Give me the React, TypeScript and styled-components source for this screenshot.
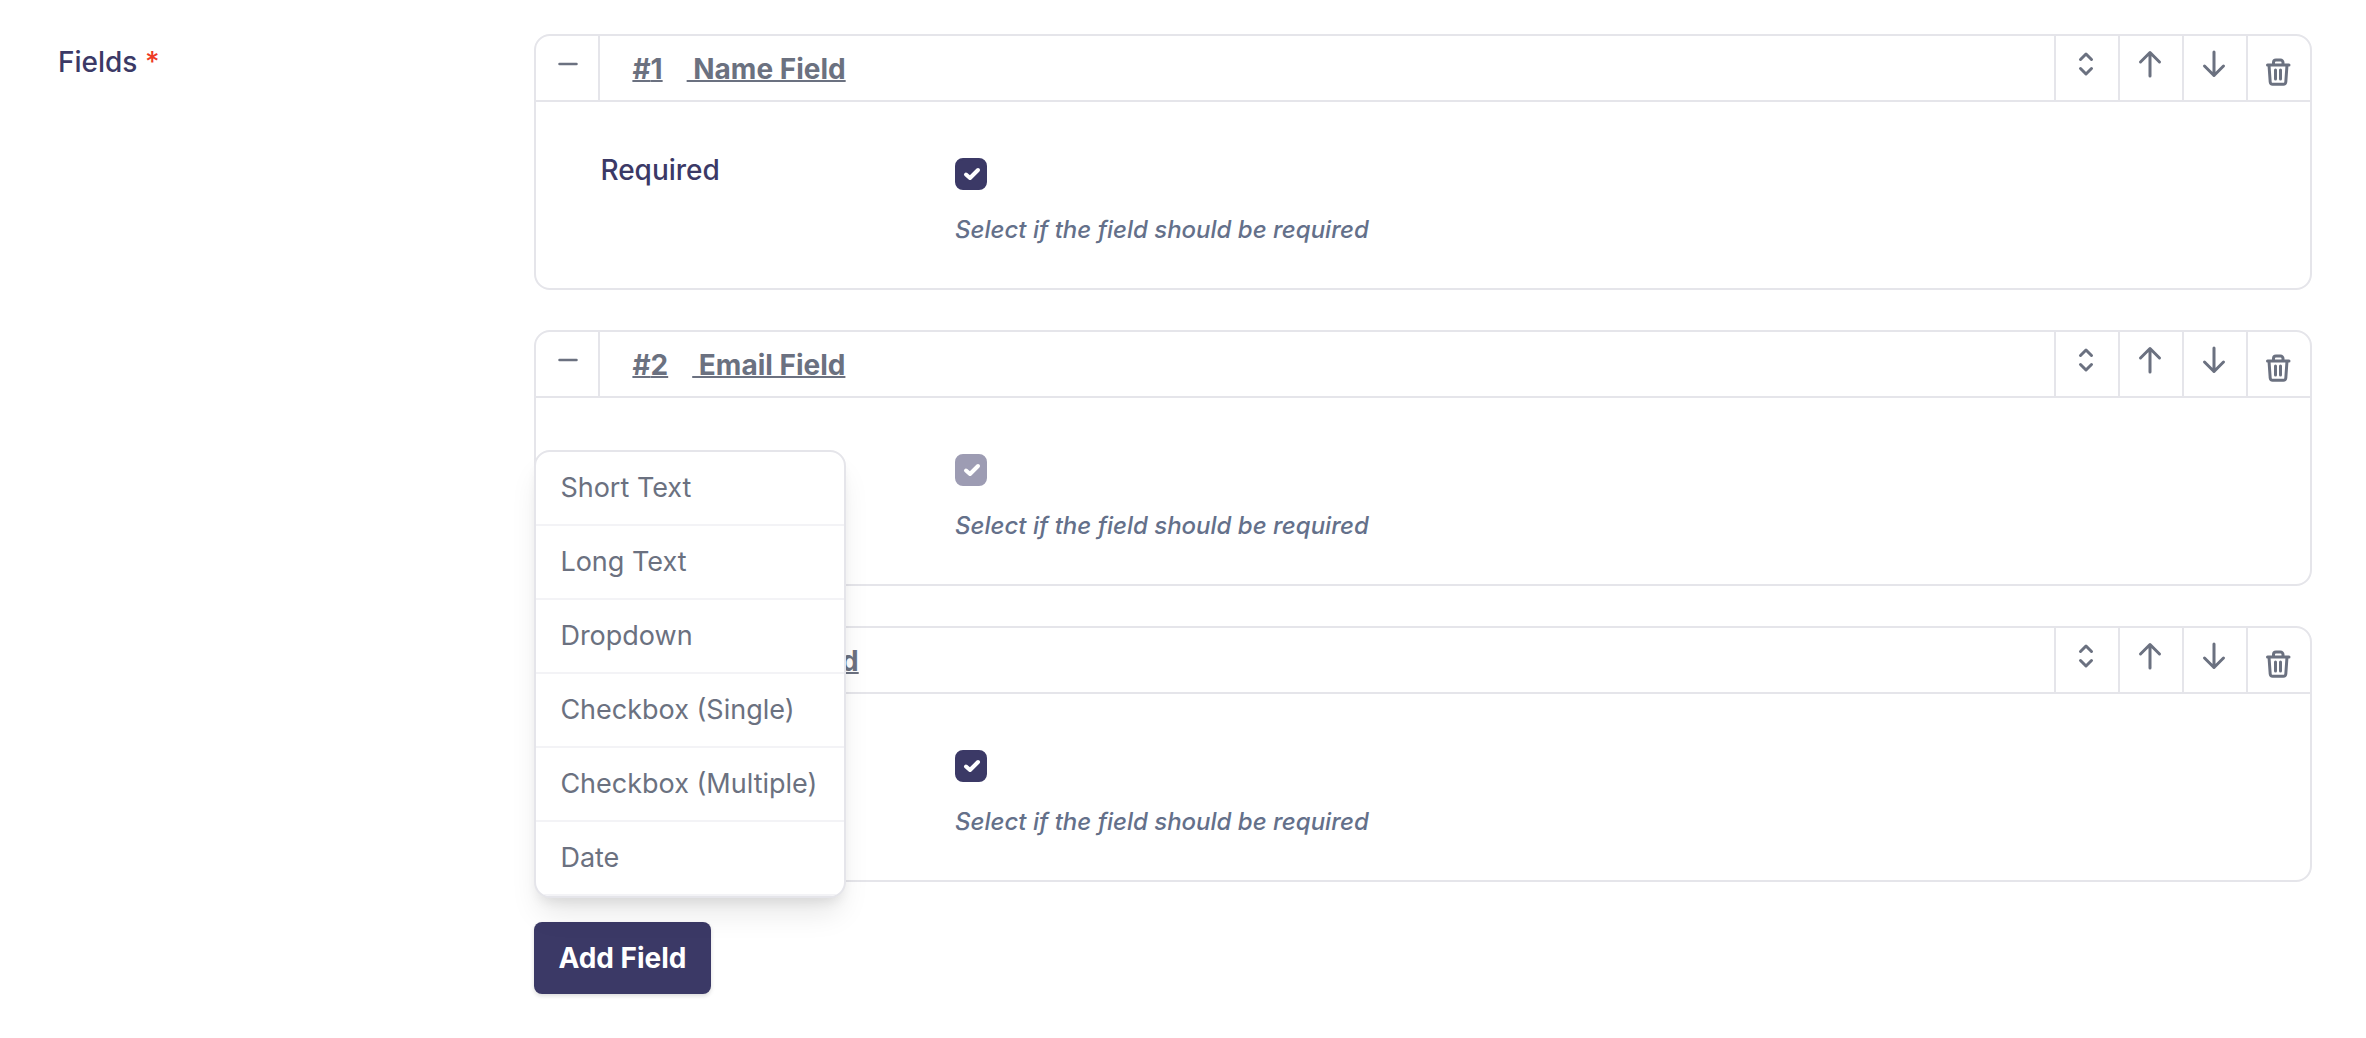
import React, { useState } from "react";
import styled, { createGlobalStyle } from "styled-components";

const color = {
  brand: "#3b3966",
  line: "#e5e5ea",
  lineSoft: "#f3f3f6",
  text: "#6b7180",
  help: "#64708a",
  danger: "#ee3a24",
};

const GlobalStyle = createGlobalStyle`
  *, *::before, *::after { box-sizing: border-box; }
  body {
    margin: 0;
    background: #fff;
    color: ${color.text};
    font-family: Inter, "Liberation Sans", sans-serif;
    font-size: 28px;
    line-height: 40px;
  }
  button { font: inherit; color: inherit; background: none; border: 0; padding: 0; cursor: pointer; }
`;

const FormRow = styled.main`
  display: grid;
  grid-template-columns: repeat(5, minmax(0, 1fr));
  column-gap: 128px;
  padding: 34px 54px 44px 58px;
`;

const GroupLabel = styled.h2`
  margin: 0;
  padding-top: 8px;
  font-size: 28px;
  font-weight: 500;
  line-height: 40px;
  color: ${color.brand};
`;

const Asterisk = styled.span`
  color: ${color.danger};
`;

const Content = styled.div`
  grid-column: span 4;
  display: flex;
  flex-direction: column;
  align-items: stretch;
  gap: 40px;
`;

const Card = styled.section`
  border: 2px solid ${color.line};
  border-radius: 16px;
  background: #fff;
`;

const CardHeader = styled.header`
  display: flex;
  height: 66px;
  border-bottom: 2px solid ${color.line};
`;

const IconButton = styled.button<{ $side: "left" | "right"; $low?: boolean }>`
  display: flex;
  justify-content: center;
  align-items: flex-start;
  width: 64px;
  padding-top: ${(p) => (p.$low ? 20 : 12)}px;
  ${(p) =>
    p.$side === "left"
      ? `border-right: 2px solid ${color.line}; padding-left: 2px;`
      : `border-left: 2px solid ${color.line}; padding-right: 2px;`}
`;

const Title = styled.h3`
  display: flex;
  align-items: center;
  flex: 1;
  gap: 24px;
  margin: 0;
  padding: 2px 0 0 32px;
  font-size: 28px;
  font-weight: 700;
  line-height: 40px;
`;

const TitlePart = styled.span`
  text-decoration: underline;
  text-decoration-thickness: 2px;
  white-space: pre;
`;

const CardBody = styled.div`
  display: grid;
  grid-template-columns: repeat(5, minmax(0, 1fr));
  column-gap: 128px;
  padding: 48px 64px 38px;
`;

const FieldLabel = styled.label`
  font-weight: 500;
  color: ${color.brand};
`;

const Control = styled.div`
  grid-column: span 4;
  display: flex;
  flex-direction: column;
  align-items: flex-start;
  gap: 20px;
  padding-top: 8px;
`;

const CheckWrap = styled.span<{ $locked?: boolean }>`
  --box: ${(p) => (p.$locked ? "#9d9cb3" : color.brand)};
  display: grid;
  width: 32px;
  height: 32px;
  & > * { grid-area: 1 / 1; }
  & > svg { pointer-events: none; }
`;

const CheckInput = styled.input`
  appearance: none;
  width: 32px;
  height: 32px;
  margin: 0;
  border: 2px solid var(--box);
  border-radius: 8px;
  background: #fff;
  &:checked { background: var(--box); }
`;

const Help = styled.p`
  margin: 0;
  font-size: 24px;
  line-height: 40px;
  font-style: italic;
  font-weight: 500;
  color: ${color.help};
`;

const AddArea = styled.div`
  position: relative;
  display: flex;
`;

const AddButton = styled.button`
  padding: 16px 24px;
  border-radius: 8px;
  background: ${color.brand};
  color: #fff;
  font-weight: 700;
  box-shadow: 0 2px 4px rgba(0, 0, 0, 0.14);
`;

const Menu = styled.div`
  position: absolute;
  left: 0;
  bottom: calc(100% + 24px);
  display: flex;
  flex-direction: column;
  min-width: 312px;
  border: 2px solid ${color.line};
  border-radius: 16px;
  background: #fff;
  overflow: hidden;
  box-shadow: 0 20px 30px -6px rgba(0, 0, 0, 0.1), 0 8px 12px -4px rgba(0, 0, 0, 0.08);
`;

const MenuItem = styled.button`
  padding: 16px 24px;
  border-bottom: 2px solid ${color.lineSoft};
  font-size: 27px;
  text-align: left;
  white-space: nowrap;
`;

const icons = {
  minus: "M7.500 16h17",
  sort: "M10.500 11.500 16 6l5.500 5.500M10.500 20.500 16 26l5.500-5.500",
  up: "M16 28V4.500M6.500 14 16 4.500l9.500 9.500",
  down: "M16 4v23.500M6.500 18l9.500 9.500 9.500-9.500",
  trash:
    "M5.500 9h21.500M11.500 9V6.500A2.500 2.500 0 0 1 14 4h4.500A2.500 2.500 0 0 1 21 6.500V9M7 9l1.200 17a2.500 2.500 0 0 0 2.500 2.300h10.600a2.500 2.500 0 0 0 2.500-2.300L25 9M13.500 14v9M18.500 14v9",
};

function Icon({ name }: { name: keyof typeof icons }) {
  return (
    <svg width="32" height="32" viewBox="0 0 32 32" fill="none" stroke="currentColor"
      strokeWidth={name === "minus" ? 2.5 : 3} strokeLinecap="round" strokeLinejoin="round" aria-hidden="true">
      <path d={icons[name]} />
    </svg>
  );
}

type Field = { name: string; locked?: boolean };

const fields: Field[] = [
  { name: "Name Field" },
  { name: "Email Field", locked: true },
  { name: "Phone Field" },
];

const fieldTypes = ["Short Text", "Long Text", "Dropdown", "Checkbox (Single)", "Checkbox (Multiple)", "Date"];

function FieldCard({ field, index }: { field: Field; index: number }) {
  const [required, setRequired] = useState(true);
  const id = `required-${index}`;
  return (
    <Card>
      <CardHeader>
        <IconButton type="button" $side="left" aria-label="Collapse"><Icon name="minus" /></IconButton>
        <Title>
          <TitlePart>#{index}</TitlePart>
          <TitlePart>{"\u00a0" + field.name}</TitlePart>
        </Title>
        <IconButton type="button" $side="right" aria-label="Reorder"><Icon name="sort" /></IconButton>
        <IconButton type="button" $side="right" aria-label="Move up"><Icon name="up" /></IconButton>
        <IconButton type="button" $side="right" aria-label="Move down"><Icon name="down" /></IconButton>
        <IconButton type="button" $side="right" $low aria-label="Delete"><Icon name="trash" /></IconButton>
      </CardHeader>
      <CardBody>
        <FieldLabel htmlFor={id}>Required</FieldLabel>
        <Control>
          <CheckWrap $locked={field.locked}>
            <CheckInput id={id} type="checkbox" checked={required} disabled={field.locked}
              onChange={(e) => setRequired(e.target.checked)} />
            {required && (
              <svg width="32" height="32" viewBox="0 0 32 32" fill="none" stroke="#fff"
                strokeWidth="4" strokeLinecap="round" strokeLinejoin="round" aria-hidden="true">
                <path d="M11 16.500 15 20l8-8" />
              </svg>
            )}
          </CheckWrap>
          <Help>Select if the field should be required</Help>
        </Control>
      </CardBody>
    </Card>
  );
}

export default function App() {
  const [open, setOpen] = useState(true);
  return (
    <>
      <GlobalStyle />
      <FormRow>
        <GroupLabel>Fields <Asterisk>*</Asterisk></GroupLabel>
        <Content>
          {fields.map((field, i) => (
            <FieldCard key={field.name} field={field} index={i + 1} />
          ))}
          <AddArea>
            <AddButton type="button" aria-expanded={open} onClick={() => setOpen(!open)}>Add Field</AddButton>
            {open && (
              <Menu>
                {fieldTypes.map((type) => (
                  <MenuItem key={type} type="button" onClick={() => setOpen(false)}>{type}</MenuItem>
                ))}
              </Menu>
            )}
          </AddArea>
        </Content>
      </FormRow>
    </>
  );
}
